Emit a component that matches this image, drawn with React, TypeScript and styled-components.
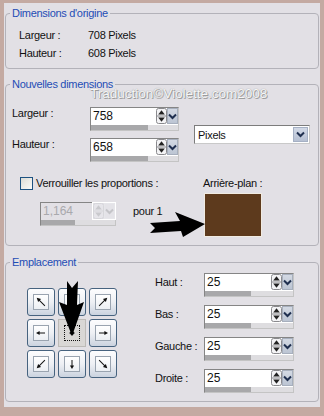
import { Fragment } from 'react'
import styled, { createGlobalStyle } from 'styled-components'

type Dir = 'nw' | 'n' | 'ne' | 'w' | 'c' | 'e' | 'sw' | 's' | 'se'

const GlobalStyle = createGlobalStyle`
  html, body {
    margin: 0;
    padding: 0;
    background: #c4aaa2;
  }
  body {
    font-family: "Liberation Sans", Arial, sans-serif;
    font-size: 11px;
    color: #111;
  }
  #root {
    width: 324px;
    height: 416px;
    overflow: hidden;
  }
`

const Panel = styled.div`
  margin: 3px 0 0 4px;
  width: 316px;
  height: 404px;
  box-sizing: border-box;
  padding: 4px 1px 0;
  background: #e2e0e5;
`

const Group = styled.fieldset<{ $top?: number }>`
  margin: ${p => p.$top ?? 0}px 0 0;
  padding: 0;
  border: 1px solid #b3b2b9;
  border-radius: 4px;
  min-width: 0;
`

const Legend = styled.legend`
  margin-left: 4px;
  padding: 0 2px;
  color: #1f4db5;
  font-size: 11px;
  line-height: 13px;
  letter-spacing: -0.3px;
`

const Text = styled.span`
  font-size: 11px;
  letter-spacing: -0.3px;
  white-space: nowrap;
`

const InfoBody = styled.div`
  display: grid;
  grid-template-columns: 69px auto;
  grid-auto-rows: 18px;
  align-items: center;
  padding: 6px 0 6px 13px;
  line-height: 18px;
`

const SizeBody = styled.div`
  position: relative;
  padding: 16px 8px 8px 6px;
`

const Watermark = styled.div`
  position: absolute;
  left: 84px;
  top: -5px;
  font-size: 13.5px;
  line-height: 16px;
  color: #f6f6f6;
  text-shadow: 1px 1px 0 #9c9c9c, 0 0 1px #8a8a8a;
  white-space: nowrap;
  pointer-events: none;
`

const SizeGrid = styled.div`
  display: grid;
  grid-template-columns: 78px 104px 116px;
  grid-template-rows: 24px 24px;
  row-gap: 7px;
`

const RowLabel = styled(Text)`
  line-height: 13px;
  align-self: start;
`

const SelectBox = styled.div`
  grid-column: 3;
  grid-row: 1 / span 2;
  align-self: center;
  width: 116px;
  height: 19px;
  box-sizing: border-box;
  border: 1px solid;
  border-color: #7c7c7c #c9c9c9 #c9c9c9 #7c7c7c;
  background: #fff;
  display: flex;
  align-items: center;
  justify-content: space-between;
  padding: 0 1px 0 3px;
`

const SelectBtn = styled.span`
  width: 15px;
  height: 15px;
  box-sizing: border-box;
  border: 1px solid #a5b0c4;
  background: linear-gradient(#d2d9e6, #b6c0d3);
  display: flex;
  align-items: center;
  justify-content: center;
`

const SpinBox = styled.div<{ $w: number; $off?: boolean }>`
  width: ${p => p.$w}px;
  height: 24px;
  box-sizing: border-box;
  border: 1px solid;
  border-color: #858585 #c4c4c4 #c4c4c4 #858585;
  background: ${p => (p.$off ? '#e2e0e5' : '#fff')};
  display: flex;
  flex-direction: column;
`

const SpinTop = styled.div`
  display: flex;
  height: 17px;
  align-items: flex-start;
`

const SpinValue = styled.span<{ $off?: boolean }>`
  flex: 1;
  padding-left: 2px;
  font-size: 12px;
  line-height: 17px;
  color: ${p => (p.$off ? '#a9a9ad' : '#111')};
`

const SpinCtl = styled.span<{ $off?: boolean }>`
  display: flex;
  height: 16px;
  outline: ${p => (p.$off ? '1px solid #fff' : 'none')};
`

const DropBtn = styled.span<{ $off?: boolean }>`
  width: 11px;
  height: 16px;
  box-sizing: border-box;
  border: 1px solid ${p => (p.$off ? '#e6e6ea' : '#a7afbd')};
  background: ${p => (p.$off ? '#e4e3e8' : 'linear-gradient(#d3d9e3, #bcc5d3)')};
  display: flex;
  align-items: center;
  justify-content: center;
`

const Track = styled.div`
  height: 5px;
  background: #dedde0;
`

const TrackFill = styled.div`
  height: 100%;
  background: #a8a8aa;
`

const LockArea = styled.div`
  display: flex;
  margin-top: 15px;
`

const LockLeft = styled.div`
  width: 191px;
  padding-left: 8px;
  box-sizing: border-box;
`

const CheckLine = styled.label`
  display: flex;
  align-items: center;
  gap: 3px;
  height: 13px;
  line-height: 13px;
`

const CheckBox = styled.span`
  width: 13px;
  height: 13px;
  box-sizing: border-box;
  border: 1px solid #1d5281;
  background: linear-gradient(135deg, #dcdcd6, #fbfbf9);
`

const RatioRow = styled.div`
  display: flex;
  align-items: flex-start;
  margin: 12px 0 0 20px;
`

const PourText = styled(Text)`
  margin-left: 17px;
  line-height: 18px;
`

const BgCol = styled.div`
  display: flex;
  flex-direction: column;
  align-items: flex-start;
`

const BgLabel = styled(Text)`
  line-height: 13px;
`

const Swatch = styled.div`
  margin: 3px 0 0 1px;
  width: 58px;
  height: 44px;
  box-sizing: border-box;
  border: 1px solid #f1ebe2;
  background: #5d3a1d;
`

const Pointer = styled.svg<{ $x: number; $y: number }>`
  position: absolute;
  left: ${p => p.$x}px;
  top: ${p => p.$y}px;
  pointer-events: none;
`

const PlaceBody = styled.div`
  display: flex;
  align-items: flex-start;
  padding: 4px 0 8px 21px;
`

const PosGrid = styled.div`
  position: relative;
  margin-top: 15px;
  display: grid;
  grid-template-columns: repeat(3, 28px);
  grid-auto-rows: 28px;
  gap: 3px;
`

const PosBtn = styled.div<{ $active?: boolean }>`
  box-sizing: border-box;
  border: 1px solid ${p => (p.$active ? '#bcbab7' : '#47637f')};
  border-radius: ${p => (p.$active ? '0' : '3px')};
  background: ${p =>
    p.$active ? '#d9d7d5' : 'linear-gradient(#fdfdfe, #eef0f4 50%, #cbd3df)'};
  display: flex;
  align-items: center;
  justify-content: center;
`

const IconFrame = styled.span`
  width: 16px;
  height: 16px;
  box-sizing: border-box;
  border: 1px solid #9aa4b0;
  background: linear-gradient(#ffffff, #eceff3);
  display: flex;
  align-items: center;
  justify-content: center;
`

const FocusFrame = styled.span`
  width: 16px;
  height: 16px;
  box-sizing: border-box;
  border: 1px dotted #111;
  display: flex;
  align-items: center;
  justify-content: center;
`

const Dot = styled.span`
  width: 4px;
  height: 4px;
  background: #111;
  transform: rotate(45deg);
`

const MarginList = styled.div`
  margin-left: 38px;
  display: grid;
  grid-template-columns: 49px 90px;
  grid-auto-rows: 24px;
  row-gap: 8px;
`

const MarginLabel = styled(Text)`
  line-height: 18px;
`

function Spinner({ off }: { off?: boolean }) {
  const ink = off ? '#c9c9cd' : '#222'
  const edge = off ? '#d6d6da' : '#8a8a8e'
  return (
    <svg width="11" height="16" viewBox="0 0 11 16">
      <rect x="0.5" y="0.5" width="10" height="15" rx="2" fill={off ? '#e6e5ea' : '#f3f3f5'} stroke={edge} />
      <line x1="1" y1="8" x2="10" y2="8" stroke={edge} />
      <path d="M5.5 2.2 L8.8 6.4 H2.2 Z" fill={ink} />
      <path d="M5.5 13.8 L8.8 9.6 H2.2 Z" fill={ink} />
    </svg>
  )
}

function Chevron({ off }: { off?: boolean }) {
  return (
    <svg width="9" height="7" viewBox="0 0 9 7">
      <path d="M1 1.5 L4.5 5 L8 1.5" fill="none" stroke={off ? '#c4c4c8' : '#1f2f4f'} strokeWidth="2" />
    </svg>
  )
}

function SpinField({ value, width, fill, off }: { value: string; width: number; fill: number; off?: boolean }) {
  return (
    <SpinBox $w={width} $off={off}>
      <SpinTop>
        <SpinValue $off={off}>{value}</SpinValue>
        <SpinCtl $off={off}>
          <Spinner off={off} />
          <DropBtn $off={off}>
            <Chevron off={off} />
          </DropBtn>
        </SpinCtl>
      </SpinTop>
      <Track>
        <TrackFill style={{ width: `${fill}%` }} />
      </Track>
    </SpinBox>
  )
}

const angles: Record<string, number> = { n: 0, ne: 45, e: 90, se: 135, s: 180, sw: 225, w: 270, nw: 315 }

function PosArrow({ dir }: { dir: Dir }) {
  const diag = dir.length === 2
  const tail = diag ? 12.5 : 11
  return (
    <svg width="14" height="14" viewBox="0 0 14 14">
      <g transform={`rotate(${angles[dir]} 7 7)`}>
        <line x1="7" y1={tail} x2="7" y2={diag ? 3 : 4} stroke="#111" strokeWidth="1" />
        <path d={diag ? 'M7 1 L4.9 5 H9.1 Z' : 'M7 2 L4.9 5.6 H9.1 Z'} fill="#111" />
      </g>
    </svg>
  )
}

const positions: Dir[] = ['nw', 'n', 'ne', 'w', 'c', 'e', 'sw', 's', 'se']

const margins = [
  { label: 'Haut :', value: '25' },
  { label: 'Bas :', value: '25' },
  { label: 'Gauche :', value: '25' },
  { label: 'Droite :', value: '25' },
]

export default function App() {
  return (
    <>
      <GlobalStyle />
      <Panel>
        <Group>
          <Legend>Dimensions d'origine</Legend>
          <InfoBody>
            <Text>Largeur :</Text>
            <Text>708 Pixels</Text>
            <Text>Hauteur :</Text>
            <Text>608 Pixels</Text>
          </InfoBody>
        </Group>

        <Group $top={9}>
          <Legend>Nouvelles dimensions</Legend>
          <SizeBody>
            <Watermark>Traduction©Violette.com2008</Watermark>
            <SizeGrid>
              <RowLabel>Largeur :</RowLabel>
              <SpinField value="758" width={89} fill={65} />
              <SelectBox>
                <Text>Pixels</Text>
                <SelectBtn>
                  <Chevron />
                </SelectBtn>
              </SelectBox>
              <RowLabel>Hauteur :</RowLabel>
              <SpinField value="658" width={89} fill={65} />
            </SizeGrid>
            <LockArea>
              <LockLeft>
                <CheckLine>
                  <CheckBox />
                  <Text>Verrouiller les proportions :</Text>
                </CheckLine>
                <RatioRow>
                  <SpinField value="1,164" width={76} fill={46} off />
                  <PourText>pour 1</PourText>
                </RatioRow>
              </LockLeft>
              <BgCol>
                <BgLabel>Arrière-plan :</BgLabel>
                <Swatch />
              </BgCol>
            </LockArea>
            <Pointer $x={140} $y={119} width="62" height="30" viewBox="0 0 62 30">
              <path d="M4 13 L34 11 L29 2 L59 14 L37 27 L35 21 L4 23 L9 18 Z" fill="#000" />
            </Pointer>
          </SizeBody>
        </Group>

        <Group $top={10}>
          <Legend>Emplacement</Legend>
          <PlaceBody>
            <PosGrid>
              {positions.map(d =>
                d === 'c' ? (
                  <PosBtn key={d} $active>
                    <FocusFrame>
                      <Dot />
                    </FocusFrame>
                  </PosBtn>
                ) : (
                  <PosBtn key={d}>
                    <IconFrame>
                      <PosArrow dir={d} />
                    </IconFrame>
                  </PosBtn>
                )
              )}
              <Pointer $x={0} $y={-8} width="60" height="60" viewBox="0 0 60 60">
                <path d="M40 1 L45 8 L51 1 L50 25 L57 22 L45 56 L32 22 L40 25 Z" fill="#000" />
              </Pointer>
            </PosGrid>
            <MarginList>
              {margins.map(m => (
                <Fragment key={m.label}>
                  <MarginLabel>{m.label}</MarginLabel>
                  <SpinField value={m.value} width={90} fill={52} />
                </Fragment>
              ))}
            </MarginList>
          </PlaceBody>
        </Group>
      </Panel>
    </>
  )
}
